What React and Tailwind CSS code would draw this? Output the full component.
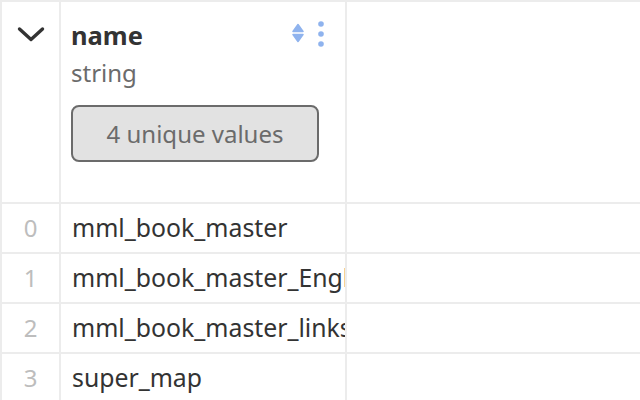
import React from "react";

const rows = [
  "mml_book_master",
  "mml_book_master_English_version",
  "mml_book_master_links",
  "super_map",
];

const SortIcon = () => (
  <svg width="12" height="20" viewBox="0 0 12 20" fill="#8fb3ee">
    <path d="M6 1.5 L11 8.5 L1 8.5 Z" strokeLinejoin="round" stroke="#8fb3ee" strokeWidth="1.5" />
    <path d="M6 18.5 L11 11.5 L1 11.5 Z" strokeLinejoin="round" stroke="#8fb3ee" strokeWidth="1.5" />
  </svg>
);

const DotsIcon = () => (
  <svg width="8" height="26" viewBox="0 0 8 26" fill="#8fb3ee">
    <circle cx="4" cy="3" r="2.8" />
    <circle cx="4" cy="13" r="2.8" />
    <circle cx="4" cy="23" r="2.8" />
  </svg>
);

export default function App() {
  return (
    <div
      className="w-[640px] h-[400px] overflow-hidden bg-white"
      style={{ fontFamily: '"Noto Sans", "Open Sans", sans-serif' }}
    >
      <div className="border-t-2 border-l-2 border-[#ececec]">
        {/* header row */}
        <div className="flex h-[202px] border-b-2 border-[#ececec]">
          <div className="w-[59px] shrink-0 border-r-2 border-[#ececec] flex justify-center pt-[24px]">
            <svg width="28" height="16" viewBox="0 0 28 16" fill="none">
              <path d="M2.5 3 L14 13.5 L25.5 3" stroke="#333" strokeWidth="3.4" strokeLinecap="round" strokeLinejoin="round" />
            </svg>
          </div>
          <div className="w-[286px] shrink-0 border-r-2 border-[#ececec] pl-[10px] pr-[20px] pt-[18px]">
            <div className="flex items-start justify-between">
              <div className="text-[25.5px] leading-[30px] font-bold text-[#333]">name</div>
              <div className="flex items-start gap-[13px] pt-[1px]">
                <div className="pt-[2px]">
                  <SortIcon />
                </div>
                <DotsIcon />
              </div>
            </div>
            <div className="mt-[8px] text-[24px] leading-[30px] text-[#6b6b6b]">string</div>
            <div className="mt-[17px] w-[248px] h-[57px] rounded-[8px] border-2 border-[#6b6b6b] bg-[#e2e2e2] flex items-center justify-center text-[24px] text-[#6b6b6b]">
              4 unique values
            </div>
          </div>
          <div className="flex-1" />
        </div>

        {/* data rows */}
        {rows.map((name, i) => (
          <div key={i} className="flex h-[50px] border-b-2 border-[#ececec]">
            <div className="w-[59px] shrink-0 border-r-2 border-[#ececec] flex items-center justify-center text-[24px] text-[#bdbdbd]">
              {i}
            </div>
            <div className="w-[286px] shrink-0 border-r-2 border-[#ececec] pl-[11px] flex items-center overflow-hidden whitespace-nowrap text-[24.8px] text-[#333]">
              {name}
            </div>
            <div className="flex-1" />
          </div>
        ))}
      </div>
    </div>
  );
}
